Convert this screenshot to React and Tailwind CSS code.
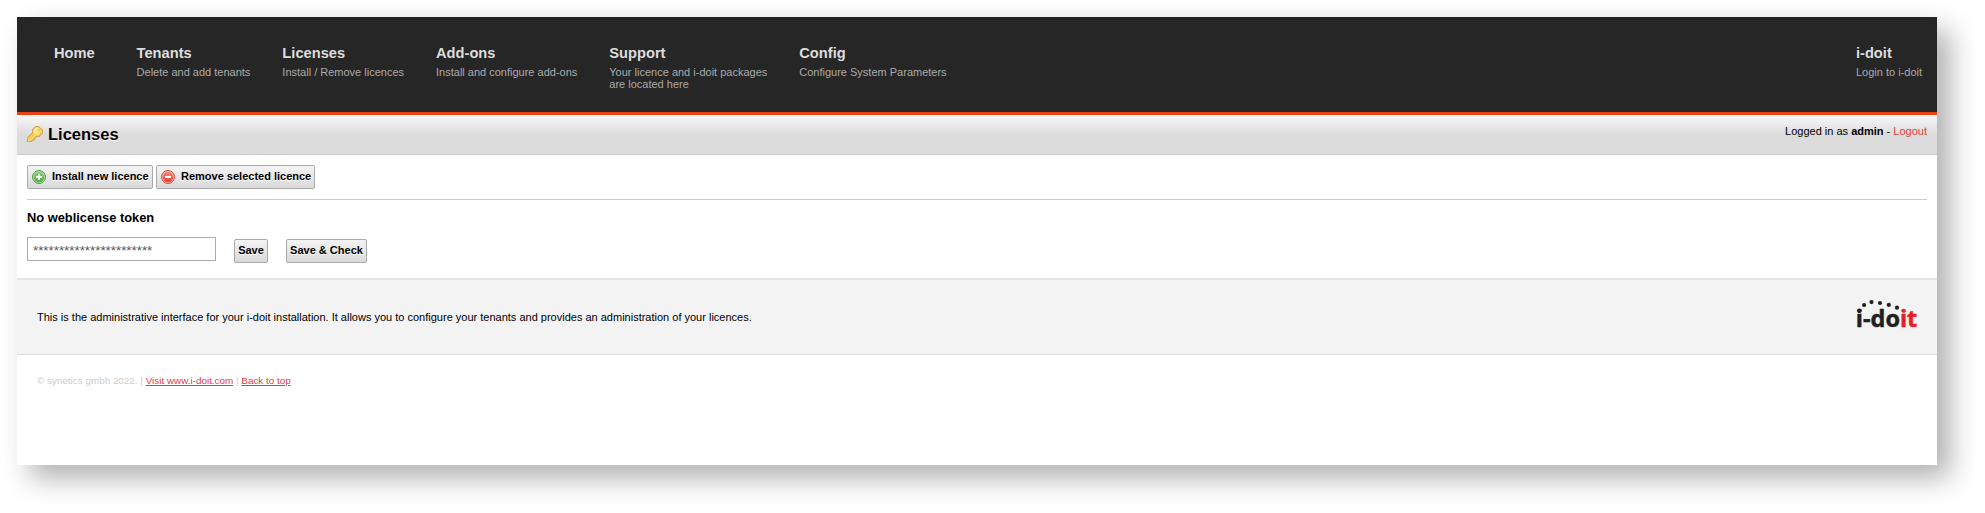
const items = [
  { title: 'Tenants', lines: ['Delete and add tenants'] },
  { title: 'Licenses', lines: ['Install / Remove licences'] },
  { title: 'Add-ons', lines: ['Install and configure add-ons'] },
  { title: 'Support', lines: ['Your licence and i-doit packages', 'are located here'] },
  { title: 'Config', lines: ['Configure System Parameters'] },
];

function NavItem({ title, lines }) {
  return (
    <div className="mr-8 whitespace-nowrap">
      <div className="text-[14.67px] leading-[17px] font-bold text-[#dddddd]">{title}</div>
      <div className="mt-1 text-[11px] leading-[12px] text-[#aaaaaa]">
        {lines.map((l) => (
          <div key={l}>{l}</div>
        ))}
      </div>
    </div>
  );
}

function KeyIcon() {
  return (
    <svg width="16" height="16" viewBox="0 0 16 16" className="shrink-0">
      <defs>
        <linearGradient id="gold" x1="0" y1="0" x2="1" y2="1">
          <stop offset="0" stopColor="#fff3a8" />
          <stop offset="0.55" stopColor="#fbe07a" />
          <stop offset="1" stopColor="#f3b850" />
        </linearGradient>
      </defs>
      <path
        d="M8.9.6h2.5l4.1 3.8v2.4l-3.4 3.6H9.4l-1.3 1.1v1.2H6.9v1.3H5.6l-1.5 1.5H.6v-3.6l4.9-4.8V4z"
        fill="url(#gold)"
        stroke="#d9a045"
        strokeWidth="1.1"
        strokeLinejoin="round"
      />
      <path d="M1.8 13.4l5.6-5.6" stroke="#f3c431" strokeWidth="1.4" fill="none" />
      <path d="M6.8 4.6l2.6-2.6" stroke="#fffbd8" strokeWidth="1" fill="none" />
      <path d="M10.8 3l2.4 2.3" stroke="#e6b75e" strokeWidth="1.1" />
    </svg>
  );
}

function RoundIcon({ id, from, to, rim, ring, plus }) {
  return (
    <svg width="14" height="14" viewBox="0 0 14 14" className="shrink-0">
      <defs>
        <linearGradient id={id} x1="0" y1="0" x2="0" y2="1">
          <stop offset="0" stopColor={from} />
          <stop offset="1" stopColor={to} />
        </linearGradient>
      </defs>
      <circle cx="7" cy="7" r="6.5" fill={ring} stroke={rim} />
      <circle cx="7" cy="7" r="5.2" fill={`url(#${id})`} />
      <path d={plus ? 'M4 7h6M7 4v6' : 'M4 7h6'} stroke="#fff" strokeWidth="2" />
    </svg>
  );
}

function Button({ children, className }) {
  return (
    <button
      className={`flex h-6 items-center whitespace-nowrap rounded-[2px] border border-[#aaaaaa] bg-linear-to-b from-[#f4f4f4] to-[#d9d9d9] text-[11px] leading-[13px] font-bold text-black [text-shadow:0_1px_0_#fff] ${className}`}
    >
      {children}
    </button>
  );
}

function Logo() {
  return (
    <svg width="66" height="36" viewBox="0 0 66 36">
      <g fill="#231f20">
        <circle cx="3.4" cy="11.7" r="2.2" />
        <circle cx="8.1" cy="6" r="2.1" />
        <circle cx="15.5" cy="3.1" r="2.1" />
        <circle cx="24" cy="4" r="2.1" />
        <circle cx="32.8" cy="5.9" r="2.1" />
        <circle cx="41" cy="8.7" r="2.1" />
      </g>
      <text
        x="-0.2"
        y="27.5"
        fontFamily="'Open Sans', 'Noto Sans', sans-serif"
        fontWeight="700"
        fontSize="22.5"
        textLength="61.5"
        lengthAdjust="spacingAndGlyphs"
        strokeWidth="0.5"
        stroke="#231f20"
        fill="#231f20"
      >
        i-do<tspan fill="#ed1c24" stroke="#ed1c24">it</tspan>
      </text>
    </svg>
  );
}

export default function App() {
  return (
    <div className="h-[513px] w-[1985px] overflow-hidden bg-white pt-[17px] pl-[17px] font-['Liberation_Sans',Arial,sans-serif] text-[11px] text-black">
      <div className="flex h-[448px] w-[1920px] flex-col bg-white shadow-[13px_13px_26px_rgba(0,0,0,0.31)]">
        <header className="flex h-[98px] shrink-0 border-b-3 border-[#ee4015] bg-[#262626] pt-[28px] pr-[15px] pl-[37px]">
          <div className="w-[82.6px] text-[14.67px] leading-[17px] font-bold text-[#dddddd]">Home</div>
          {items.map((i) => (
            <NavItem key={i.title} {...i} />
          ))}
          <div className="-mr-8 ml-auto">
            <NavItem title="i-doit" lines={['Login to i-doit']} />
          </div>
        </header>

        <div className="flex h-10 shrink-0 justify-between border-b border-[#c8c8c8] bg-linear-to-b from-[#f8f8f8] to-[#dcdcdc] to-50% px-[10px]">
          <h1 className="flex h-[38px] items-center gap-[5px] text-[16.5px] leading-[19px] font-bold [text-shadow:0_1px_0_#fff]">
            <KeyIcon />
            <span className="pt-px">Licenses</span>
          </h1>
          <div className="pt-[10px] leading-[13px]">
            Logged in as <b>admin</b> - <span className="text-[#e03c3c]">Logout</span>
          </div>
        </div>

        <main className="flex h-[123px] shrink-0 flex-col px-[10px] pt-[10px]">
          <div className="flex gap-[3px]">
            <Button className="w-[126px] gap-[6px] pb-px pl-1">
              <RoundIcon id="g" from="#8fd07c" to="#4fa93f" rim="#4d9a45" ring="#b4deaa" plus />
              Install new licence
            </Button>
            <Button className="w-[159px] gap-[6px] pb-px pl-1">
              <RoundIcon id="r" from="#f58a7c" to="#e2432f" rim="#cf4d40" ring="#f8b4aa" />
              Remove selected licence
            </Button>
          </div>
          <div className="mt-[10px] h-px bg-[#cccccc]" />
          <h2 className="mt-[10px] text-[12.87px] leading-[15px] font-bold">No weblicense token</h2>
          <div className="mt-[12px] flex">
            <div className="h-6 w-[189px] border border-[#aaaaaa] pt-[5px] pl-[5px] text-[13.33px] leading-[15px] text-[#555555]">
              ***********************
            </div>
            <Button className="mt-[2px] ml-[18px] w-[34px] justify-center pb-px">Save</Button>
            <Button className="mt-[2px] ml-[18px] w-[81px] justify-center pb-px">Save &amp; Check</Button>
          </div>
        </main>

        <section className="flex h-[77px] shrink-0 justify-between border-t-2 border-b border-t-[#e4e4e4] border-b-[#dddddd] bg-[#f3f3f3] pr-[15px] pl-5">
          <p className="pt-[31px] leading-[13px]">
            This is the administrative interface for your i-doit installation. It allows you to configure your tenants and
            provides an administration of your licences.
          </p>
          <div className="pt-[19px]">
            <Logo />
          </div>
        </section>

        <footer className="pt-[20px] pl-5 text-[9.9px] leading-[12px] text-[#cccccc]">
          © synetics gmbh 2022. | <a className="text-[#e03c3c] underline">Visit www.i-doit.com</a> |{' '}
          <a className="text-[#e03c3c] underline">Back to top</a>
        </footer>
      </div>
    </div>
  );
}
